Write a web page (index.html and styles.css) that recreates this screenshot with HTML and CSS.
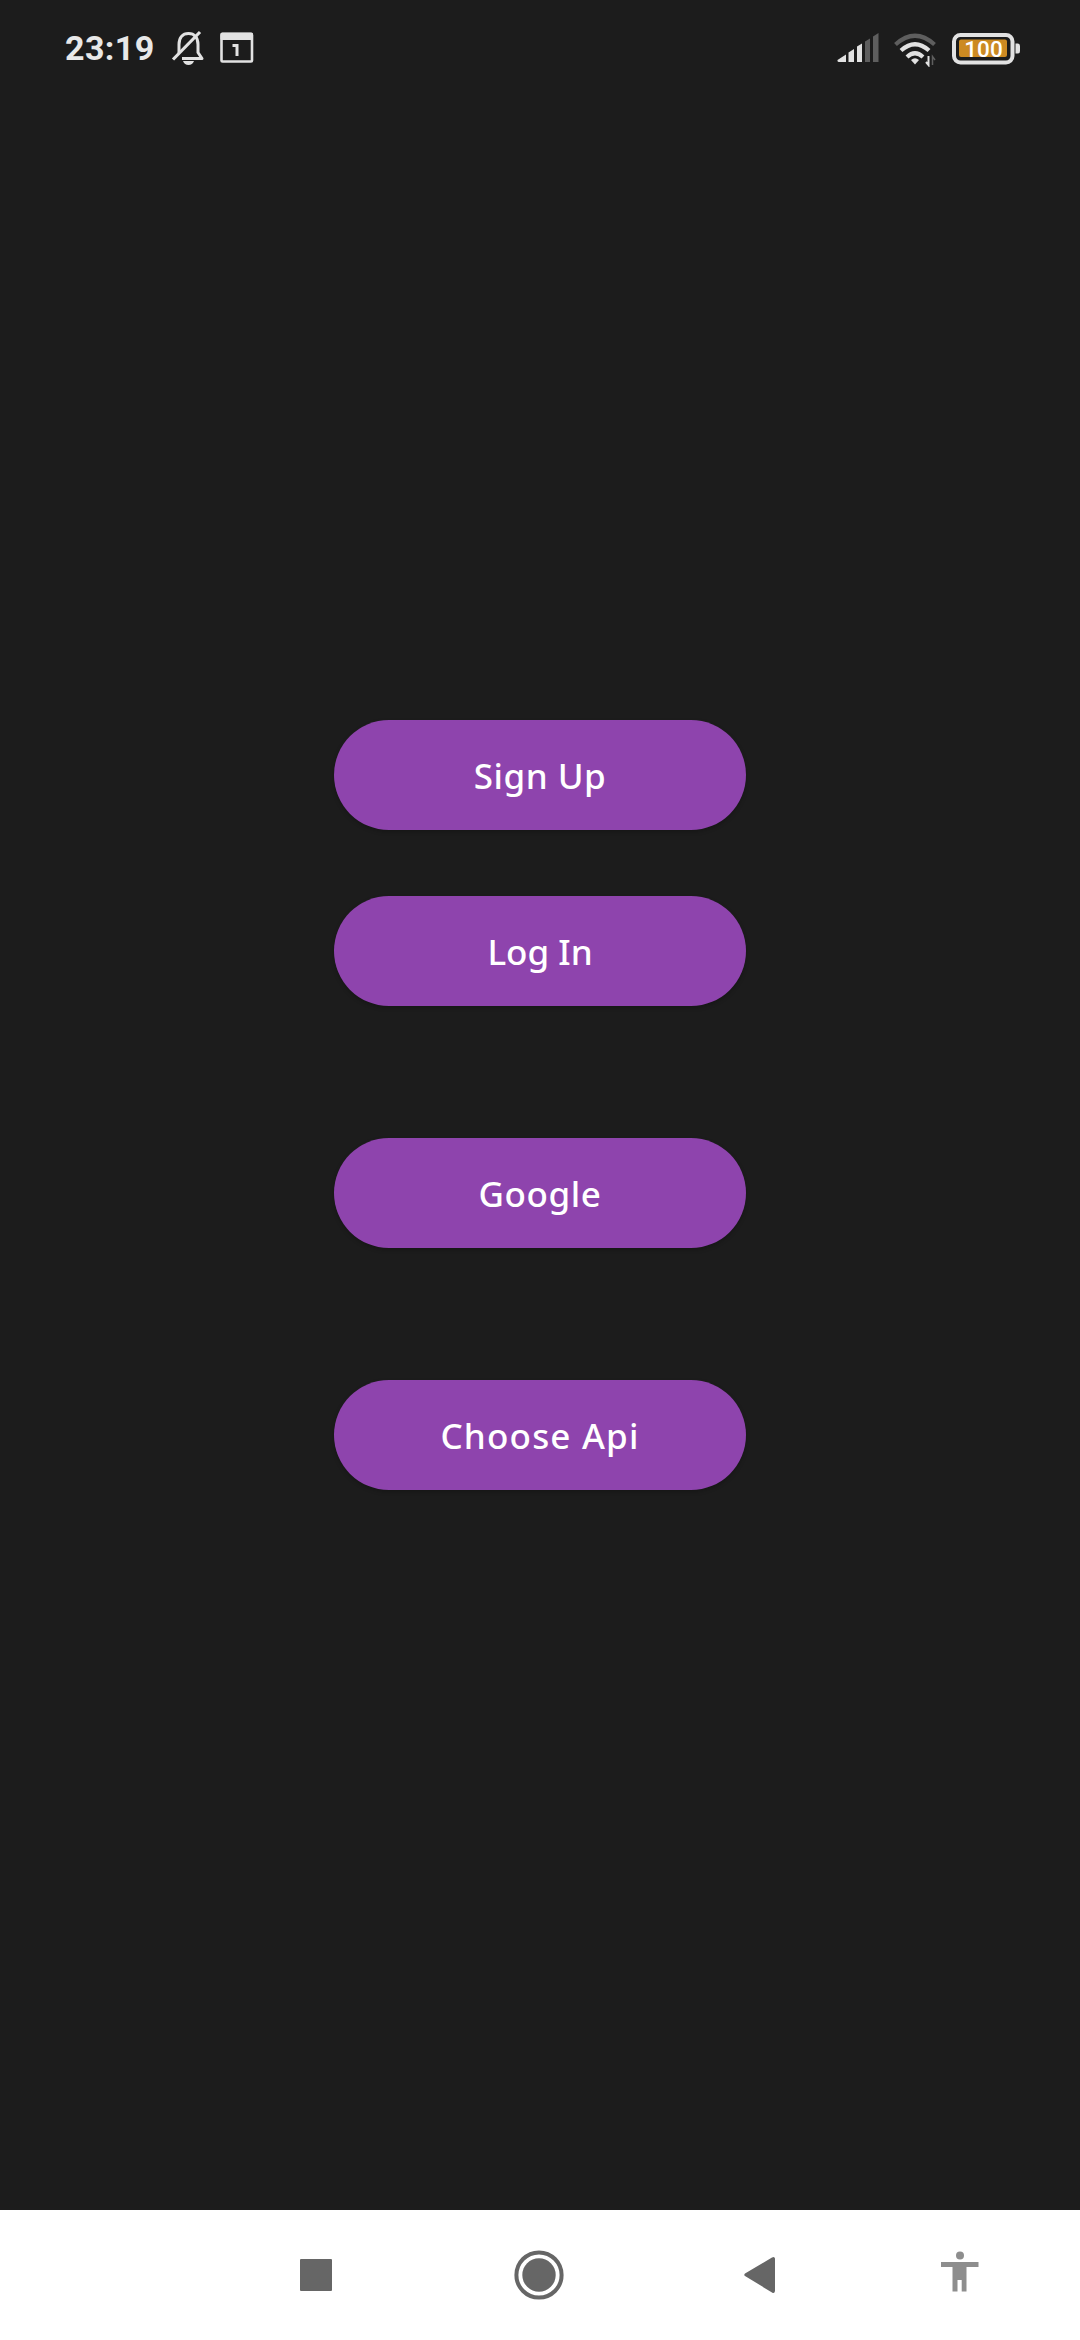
FILE: index.html
```html
<!DOCTYPE html>
<html lang="en">
<head>
<meta charset="utf-8">
<title>Welcome</title>
<link rel="stylesheet" href="styles.css">
</head>
<body>
<div class="screen">
  <header class="status">
    <span class="time">23:19</span>
    <svg class="bell" width="34" height="36" viewBox="0 0 34 36" fill="none" stroke="#e2e2e2">
      <path d="M8 23V14.500C8 7.500 11.500 3.500 17.500 3.500S27 7.500 27 14.500V22.500L31 28.500H11" stroke-width="3" stroke-linejoin="round"/>
      <path d="M2 29.500L29 2" stroke-width="3.200"/>
      <path d="M12 31H23Q21.500 35 17.500 35T12 31Z" fill="#e2e2e2" stroke="none"/>
    </svg>
    <svg class="calendar" width="34" height="32" viewBox="0 0 34 32">
      <rect x="1.500" y="2" width="30.500" height="27.500" rx="1" fill="none" stroke="#e2e2e2" stroke-width="2.600"/>
      <rect x="0.500" y="0.500" width="32.500" height="7.500" rx="1.500" fill="#e2e2e2"/>
      <path d="M12.500 13.500H17V24" fill="none" stroke="#e2e2e2" stroke-width="3"/>
    </svg>
    <span class="spacer"></span>
    <svg class="signal" width="44" height="32" viewBox="0 0 44 32">
      <g fill="#e2e2e2">
        <path d="M0.500 28L9 22.500V30H1.500Q0 29.500 0.500 28Z"/>
        <path d="M11.500 20.500L17 17V30H11.500Z"/>
        <path d="M20 14.500L25 11.500V30H20Z"/>
      </g>
      <g fill="#5e5e5e">
        <path d="M28 9.500L33 6.500V30H28Z"/>
        <path d="M36 4.500L41.500 1V30H36Z"/>
      </g>
    </svg>
    <svg class="wifi" width="44" height="34" viewBox="0 0 44 34" fill="none">
      <path d="M1.500 11.500Q21 -6 40.500 11.500" stroke="#5e5e5e" stroke-width="4.200"/>
      <path d="M7 17.500Q21 5 35 17.500M13 24Q21 16.500 29 24" stroke="#e2e2e2" stroke-width="4.200"/>
      <path d="M17 27Q21 23.500 25 27L21 31.500Z" fill="#e2e2e2"/>
      <path d="M34.500 23V32L32 29" stroke="#e2e2e2" stroke-width="2"/>
      <path d="M38.500 32V23.500L41 27" stroke="#5e5e5e" stroke-width="1.500"/>
    </svg>
    <svg class="battery" width="70" height="32" viewBox="0 0 70 32">
      <rect x="2" y="2" width="58.500" height="27.500" rx="6.500" fill="none" stroke="#e2e2e2" stroke-width="4"/>
      <rect x="7" y="6.500" width="48" height="17.500" rx="2" fill="#cc8a22"/>
      <path d="M63.500 10.500H66Q68 10.500 68 13V18Q68 20.500 66 20.500H63.500Z" fill="#e2e2e2"/>
      <text class="level" x="31.500" y="24" text-anchor="middle">100</text>
    </svg>
  </header>
  <main class="actions">
    <button class="btn signup">Sign Up</button>
    <button class="btn login">Log In</button>
    <button class="btn google">Google</button>
    <button class="btn api">Choose Api</button>
  </main>
  <nav class="nav">
    <svg class="recents" width="32" height="32" viewBox="0 0 32 32"><rect width="32" height="32" rx="1" fill="#666"/></svg>
    <svg class="home" width="50" height="50" viewBox="0 0 50 50"><circle cx="25" cy="25" r="22.600" fill="none" stroke="#666" stroke-width="4"/><circle cx="25" cy="25" r="16.700" fill="#666"/></svg>
    <svg class="back" width="32" height="38" viewBox="0 0 32 38"><path d="M1 17.500L28 1.500Q30.500 0 31 2.500V35Q30.500 38 28 36.500L1 20Q-0.500 19 1 17.500Z" fill="#666"/></svg>
    <svg class="access" width="38" height="42" viewBox="0 0 38 42" fill="#8e8e8e"><circle cx="19" cy="4.500" r="4"/><path d="M0 11H37.500V16H25.500V40.500H20.700V29H16.500V40.500H11.500V16H0Z"/></svg>
  </nav>
</div>
</body>
</html>
```
FILE: styles.css
```css
body {
  margin: 0;
}

.screen {
  display: flex;
  flex-direction: column;
  height: 2340px;
  background: #1c1c1c;
}

.status {
  display: flex;
  align-items: flex-start;
  box-sizing: border-box;
  height: 96px;
  padding: 30px 58px 0 65px;
}

.time {
  width: 90px;
  margin-top: -2px;
  color: #e8e8e8;
  font: 700 34px/40px Roboto, sans-serif;
  letter-spacing: 0.4px;
}

.bell {
  margin-left: 16px;
}

.calendar {
  margin: 2px 0 0 15px;
}

.spacer {
  flex: 1;
}

.signal {
  margin: 2px 13px 0 0;
}

.wifi {
  margin: 3px 14px 0 0;
}

.battery {
  margin-top: 3px;
}

.level {
  fill: #fff;
  font: 500 22.5px Roboto, sans-serif;
}

.actions {
  display: flex;
  flex: 1;
  flex-direction: column;
  align-items: center;
  padding-top: 624px;
}

.btn {
  box-sizing: border-box;
  width: 412px;
  height: 110px;
  padding: 2px 0 0;
  border: 0;
  border-radius: 55px;
  background: #8e44ad;
  box-shadow: 0 2px 4px rgba(0, 0, 0, 0.22);
  color: #fff;
  font: 500 35px/50px "Noto Sans", sans-serif;
}

.signup {
  letter-spacing: 0.5px;
}

.login {
  margin-top: 66px;
}

.google,
.api {
  margin-top: 132px;
}

.google {
  letter-spacing: 0.6px;
}

.api {
  letter-spacing: 1.2px;
}

.nav {
  display: flex;
  align-items: center;
  box-sizing: border-box;
  height: 130px;
  padding: 0 101px 0 300px;
  background: #fff;
}

.home {
  margin-left: 182px;
}

.back {
  margin-left: 180px;
}

.access {
  margin: 0 0 6px 165px;
}
```
